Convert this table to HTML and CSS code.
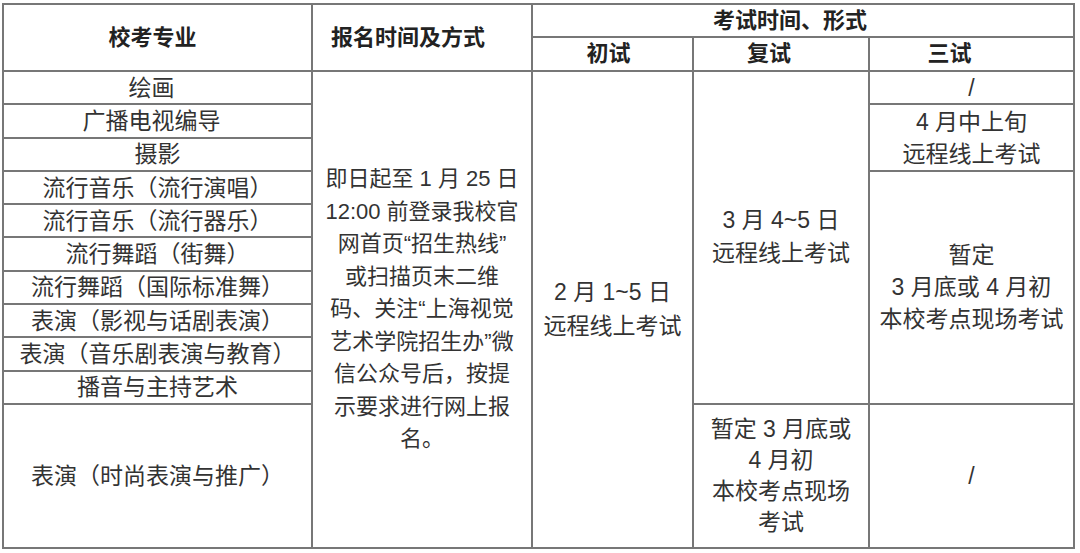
FILE: index.html
```html
<!DOCTYPE html>
<html lang="zh-CN">
<head>
<meta charset="utf-8">
<link rel="stylesheet" href="styles.css">
</head>
<body>
<table class="grid">
  <colgroup>
    <col class="c-major">
    <col class="c-apply">
    <col class="c-first">
    <col class="c-second">
    <col class="c-third">
  </colgroup>
  <tr class="h1">
    <th rowspan="2" class="hd-major">校考专业</th>
    <th rowspan="2" class="hd-apply">报名时间及方式</th>
    <th colspan="3" class="hd-exam">考试时间、形式</th>
  </tr>
  <tr class="h2">
    <th class="hd-first">初试</th>
    <th class="hd-second">复试</th>
    <th class="hd-third">三试</th>
  </tr>
  <tr class="r">
    <td class="shift">绘画</td>
    <td rowspan="11" class="apply">即日起至 1 月 25 日<br>12:00 前登录我校官<br>网首页“招生热线”<br>或扫描页末二维<br>码、关注“上海视觉<br>艺术学院招生办”微<br>信公众号后，按提<br>示要求进行网上报<br>名。</td>
    <td rowspan="11" class="multi first">2 月 1~5 日<br>远程线上考试</td>
    <td rowspan="10" class="multi second">3 月 4~5 日<br>远程线上考试</td>
    <td>/</td>
  </tr>
  <tr class="r">
    <td class="shift">广播电视编导</td>
    <td rowspan="2" class="multi">4 月中上旬<br>远程线上考试</td>
  </tr>
  <tr class="r">
    <td>摄影</td>
  </tr>
  <tr class="r">
    <td>流行音乐（流行演唱）</td>
    <td rowspan="7" class="multi">暂定<br>3 月底或 4 月初<br>本校考点现场考试</td>
  </tr>
  <tr class="r"><td>流行音乐（流行器乐）</td></tr>
  <tr class="r"><td>流行舞蹈（街舞）</td></tr>
  <tr class="r"><td>流行舞蹈（国际标准舞）</td></tr>
  <tr class="r"><td>表演（影视与话剧表演）</td></tr>
  <tr class="r"><td>表演（音乐剧表演与教育）</td></tr>
  <tr class="r"><td>播音与主持艺术</td></tr>
  <tr class="last">
    <td>表演（时尚表演与推广）</td>
    <td class="multi tight">暂定 3 月底或<br>4 月初<br>本校考点现场<br>考试</td>
    <td>/</td>
  </tr>
</table>
</body>
</html>
```

FILE: styles.css
```css
html, body {
  margin: 0;
  padding: 0;
  background: #ffffff;
}

body {
  padding: 3px 0 0 2px;
  font-family: "Liberation Sans", "Noto Sans CJK SC", sans-serif;
  color: #333333;
}

.grid {
  border-collapse: collapse;
  table-layout: fixed;
  width: 1073px;
}

.c-major { width: 309px; }
.c-apply { width: 220px; }
.c-first { width: 161px; }
.c-second { width: 176px; }
.c-third { width: 205px; }

.grid th,
.grid td {
  border: 2px solid #777777;
  padding: 0;
  text-align: center;
  vertical-align: middle;
  font-size: 23px;
  line-height: 26px;
  white-space: nowrap;
  overflow: hidden;
}

.grid th {
  font-size: 22px;
  font-weight: 700;
  color: #222222;
}

.grid .hd-major { padding-right: 10px; }
.grid .hd-apply { padding-right: 28px; }
.grid .hd-exam { padding-right: 26px; }
.grid .hd-first { padding-right: 8px; }
.grid .hd-second { padding-right: 24px; }
.grid .hd-third { padding-right: 44px; }

.grid .shift { padding-right: 12px; }

.h1 { height: 33px; }
.h2 { height: 34px; }
.r { height: 33.3px; }
.last { height: 144px; }

.grid .multi {
  line-height: 32px;
}

.grid .first {
  line-height: 34px;
}

.grid .second {
  line-height: 33px;
}

.grid .apply {
  font-size: 22px;
  line-height: 32.5px;
}

.grid .tight {
  line-height: 31px;
}
```
